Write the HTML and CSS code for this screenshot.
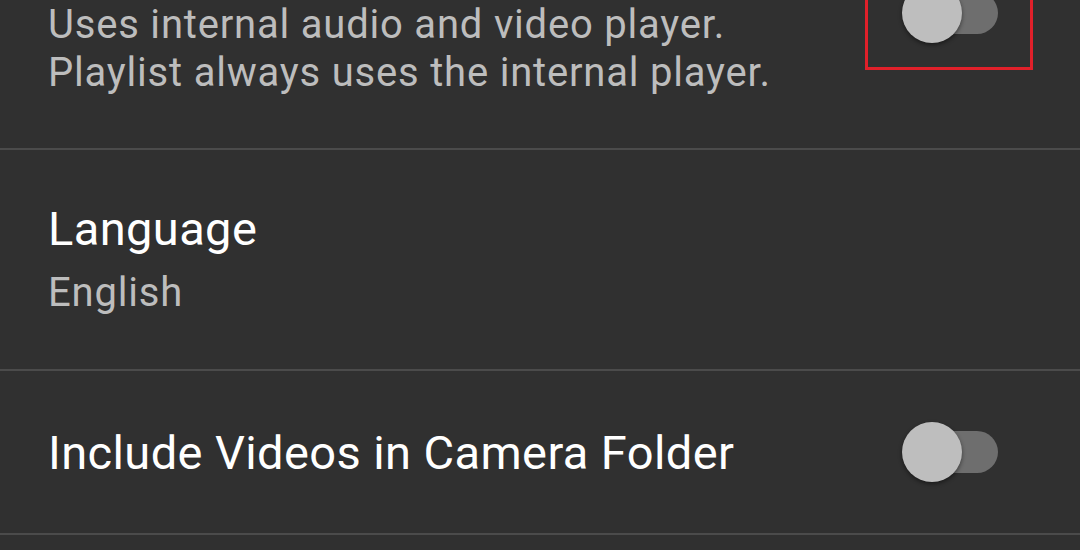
FILE: index.html
```html
<!DOCTYPE html>
<html>
<head>
<meta charset="utf-8">
<link rel="stylesheet" href="styles.css">
</head>
<body>
<div class="list">
  <div class="row row-first">
    <div class="text">
      <div class="summary">Uses internal audio and video player.<br>Playlist always uses the internal player.</div>
    </div>
    <div class="switch switch-top">
      <div class="track"></div>
      <div class="thumb"></div>
      <div class="highlight"></div>
    </div>
  </div>
  <div class="row row-lang">
    <div class="text">
      <div class="title">Language</div>
      <div class="summary">English</div>
    </div>
  </div>
  <div class="row row-camera">
    <div class="text">
      <div class="title">Include Videos in Camera Folder</div>
    </div>
    <div class="switch">
      <div class="track"></div>
      <div class="thumb"></div>
    </div>
  </div>
  <div class="row row-last"></div>
</div>
</body>
</html>
```

FILE: styles.css
```css
html, body {
  margin: 0;
  padding: 0;
  background: #303030;
  height: 550px;
  overflow: hidden;
}
body {
  font-family: Roboto, "Noto Sans", "Liberation Sans", sans-serif;
}
.list {
  display: flex;
  flex-direction: column;
}
.row {
  display: flex;
  align-items: center;
  padding: 0 82px 0 48px;
  border-bottom: 2px solid #4b4b4b;
  box-sizing: border-box;
}
.text {
  flex: 1;
  min-width: 0;
}
.title {
  font-size: 47px;
  letter-spacing: 0.4px;
  line-height: 56px;
  color: #ffffff;
}
.summary {
  font-size: 40px;
  letter-spacing: 0.8px;
  line-height: 48px;
  color: #bdbdbd;
}
.title + .summary {
  padding-top: 12px;
}
.row-first {
  height: 150px;
  align-items: flex-start;
}
.row-first .summary {
  margin-top: 1px;
}
.row-lang {
  height: 221px;
  padding-bottom: 2px;
}
.row-camera {
  height: 164px;
  padding-top: 1px;
}
.row-last {
  height: 40px;
  border-bottom: none;
}
.switch {
  position: relative;
  width: 96px;
  height: 60px;
  display: flex;
  align-items: center;
  flex-shrink: 0;
}
.switch-top {
  margin-top: -17px;
}
.row-camera .switch {
  margin-top: -1px;
}
.track {
  margin-left: 3px;
  width: 93px;
  height: 42px;
  border-radius: 21px;
  background: #6e6e6e;
}
.thumb {
  position: absolute;
  left: 0;
  top: 0;
  width: 60px;
  height: 60px;
  border-radius: 50%;
  background: #bebebe;
  box-shadow: 0 2px 4px rgba(0, 0, 0, 0.45);
}
.highlight {
  position: absolute;
  left: -37px;
  right: -35px;
  top: -27px;
  bottom: -27px;
  border: 3px solid #e0202a;
}
```
